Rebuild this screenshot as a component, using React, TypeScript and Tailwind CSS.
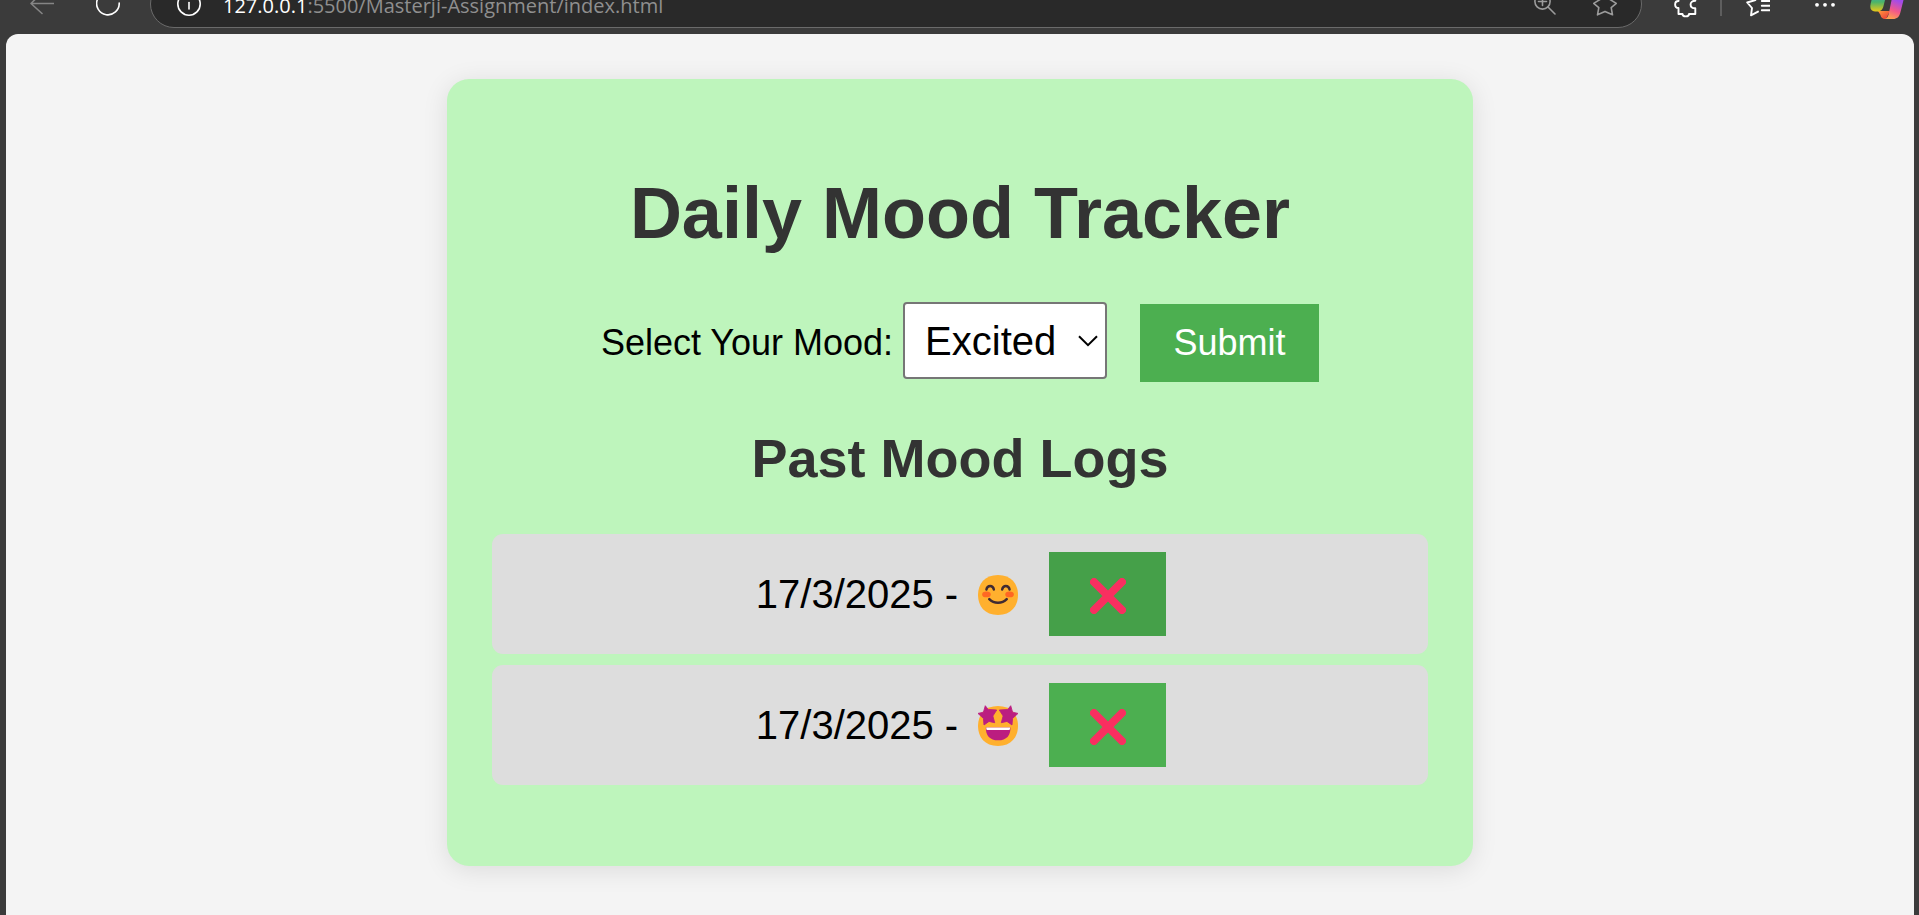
import { useState } from "react";
import type { FormEvent, ReactNode } from "react";

type Mood = "Happy" | "Excited";

const FACE =
  "M16 30C25.33 30 30 23.73 30 16C30 8.27 25.33 2 16 2C6.66 2 2 8.27 2 16C2 23.73 6.66 30 16 30Z";
const STAR =
  "M7.1 1.8L9.1 4.4L15.1 4.8L12.4 9L13.7 13.7L9.7 12.8L6.2 15.3L5.8 10.7L2 7.2L5.8 6.3Z";

function MoodFace({ mood }: { mood: Mood }) {
  return (
    <svg viewBox="2 2 28 28" className="mt-0.5 size-10 overflow-visible" role="img" aria-label={mood}>
      <path d={FACE} fill="#ffb02e" />
      {mood === "Happy" ? (
        <>
          <ellipse cx="7.9" cy="15.6" rx="3" ry="2" fill="#ff6723" />
          <ellipse cx="24.1" cy="15.6" rx="3" ry="2" fill="#ff6723" />
          <g fill="none" stroke="#402a32" strokeLinecap="round">
            <path d="M7.9 12.2C8.5 8.9 12.5 8.9 13.1 12.2" strokeWidth="1.7" />
            <path d="M18.9 12.2C19.5 8.9 23.5 8.9 24.1 12.2" strokeWidth="1.7" />
            <path d="M9.9 18.9C13.2 22.3 18.8 22.3 22.1 18.9" strokeWidth="1.8" />
          </g>
        </>
      ) : (
        <>
          <g fill="#bb1d80" stroke="#bb1d80" strokeWidth="0.6" strokeLinejoin="round">
            <path d={STAR} />
            <path d={STAR} transform="matrix(-1 0 0 1 32 0)" />
          </g>
          <path d="M7.5 17H24.7C24.9 22.5 22 26 16.1 26C10.2 26 7.3 22.5 7.5 17Z" fill="#bb1d80" />
          <path d="M7.8 17H24.4V17.7C24.4 18.4 24 18.8 23.3 18.8H8.9C8.2 18.8 7.8 18.4 7.8 17.7Z" fill="#fff" />
        </>
      )}
    </svg>
  );
}

function Icon({ width, children }: { width: string; children: ReactNode }) {
  return (
    <svg
      className={`h-8 shrink-0 ${width}`}
      fill="none"
      stroke="currentColor"
      strokeWidth="1.6"
      strokeLinecap="round"
      strokeLinejoin="round"
      aria-hidden="true"
    >
      {children}
    </svg>
  );
}

function BrowserBar() {
  return (
    <header className="h-[34px] shrink-0 overflow-hidden bg-[#3b3b3b] text-white">
      <div className="-mt-5 flex h-12 items-center pr-[14px] pl-[30px]">
        <button type="button" aria-label="Back" className="mr-[42px] text-[#858585]">
          <Icon width="w-6">
            <path d="M23.5 15.5H1M12 4.5L1 15.5L12 25.5" />
          </Icon>
        </button>
        <button type="button" aria-label="Reload" className="mr-[30px]">
          <Icon width="w-6">
            <path d="M23.2 15A11.3 11.3 0 1 1 18 6" />
          </Icon>
        </button>
        <div className="mr-[31px] flex h-12 min-w-0 grow items-center rounded-full border border-[#6a6a6a] bg-[#292929] pr-6 pl-[26px]">
          <button type="button" aria-label="Site information" className="mr-[22px]">
            <Icon width="w-6">
              <circle cx="12" cy="16" r="11.2" />
              <path d="M12 14.5V21" />
            </Icon>
          </button>
          <span className="grow truncate pt-[3px] font-['Open_Sans','Noto_Sans',sans-serif] text-[20px] leading-[30px] text-[#8f8f8f]">
            <span className="text-white">127.0.0.1</span>:5500/Masterji-Assignment/index.html
          </span>
          <button type="button" aria-label="Zoom" className="mr-[36px] text-[#9b9b9b]">
            <Icon width="w-6">
              <circle cx="9.5" cy="13.5" r="7.6" />
              <path d="M15 19L22 26M5.5 13.5H13.5M9.5 9.5V17.5" />
            </Icon>
          </button>
          <button type="button" aria-label="Add to favorites" className="text-[#9b9b9b]">
            <Icon width="w-6">
              <path d="M12 3L15.2 10.4L23.3 15.4L18.2 19.6L19.5 26.8L12 23.4L4.5 26.8L5.8 19.6L0.7 15.4L8.8 10.4Z" />
            </Icon>
          </button>
        </div>
        <button type="button" aria-label="Extensions" className="mr-[21px]">
          <Icon width="w-[26px]">
            <path
              strokeWidth="1.9"
              d="M5.5 6V13C1 13 1 20 5.5 20V26H9.5C9.5 29.2 16 29.2 16 26H22.3V20.3C16 20.3 16 12.7 22.3 12.7V6H16C16 2 9.5 2 9.5 6Z"
            />
          </Icon>
        </button>
        <span className="mr-[24px] h-6 w-0.5 shrink-0 bg-[#5e5e5e]" />
        <button type="button" aria-label="Favorites" className="mr-[43px]">
          <Icon width="w-6">
            <path
              strokeWidth="1.9"
              d="M17 8.5L15 8L12.5 4L9.5 12L1.2 14.5L6 20L5 27.3L12 23.6M15.8 13H24M15.8 17.7H24M15.8 22.3H24"
            />
          </Icon>
        </button>
        <button type="button" aria-label="Settings and more" className="mr-[32px]">
          <Icon width="w-6">
            <g fill="currentColor" stroke="none">
              <circle cx="4" cy="16.8" r="1.9" />
              <circle cx="12" cy="16.8" r="1.9" />
              <circle cx="20" cy="16.8" r="1.9" />
            </g>
          </Icon>
        </button>
        <button type="button" aria-label="Copilot">
          <svg className="h-8 w-9 shrink-0" aria-hidden="true">
            <defs>
              <linearGradient id="leaf" x1="0" y1="0" x2="0" y2="1">
                <stop offset="0.2" stopColor="#2a9fd0" />
                <stop offset="0.6" stopColor="#4cb469" />
                <stop offset="1" stopColor="#e8c818" />
              </linearGradient>
              <linearGradient id="ribbon" x1="0.6" y1="0" x2="0.3" y2="1">
                <stop offset="0.25" stopColor="#a24bea" />
                <stop offset="0.65" stopColor="#f2588a" />
                <stop offset="1" stopColor="#ffa24e" />
              </linearGradient>
              <linearGradient id="fold" x1="0" y1="0" x2="1" y2="1">
                <stop offset="0" stopColor="#ff9a3c" />
                <stop offset="1" stopColor="#e8303c" />
              </linearGradient>
            </defs>
            <path d="M9 23H21L17 31C13 31 12 29 11.5 27Z" fill="url(#fold)" />
            <path d="M9 0H19L14.5 18C13.5 22 11.5 23.5 8 23.5H6C2 23.5 0.6 20.5 1.6 16L4 6C5 2 6 0 9 0Z" fill="url(#leaf)" />
            <path d="M24 5H30C34 5 35.5 8 34.5 12L31.5 24C30.3 29 28 31 24 31H16C18 30.5 19 28.5 19.7 26Z" fill="url(#ribbon)" />
          </svg>
        </button>
      </div>
    </header>
  );
}

interface Entry {
  id: number;
  date: string;
  mood: Mood;
}

export default function App() {
  const [mood, setMood] = useState<Mood>("Excited");
  const [logs, setLogs] = useState<Entry[]>([
    { id: 1, date: "17/3/2025", mood: "Happy" },
    { id: 2, date: "17/3/2025", mood: "Excited" },
  ]);

  const submit = (event: FormEvent) => {
    event.preventDefault();
    setLogs([...logs, { id: Date.now(), date: new Date().toLocaleDateString("en-IN"), mood }]);
  };

  return (
    <div className="flex min-h-screen flex-col bg-[#3b3b3b] font-['Liberation_Sans',Arial,sans-serif]">
      <BrowserBar />
      <main className="mr-[5px] ml-1.5 grow rounded-t-xl bg-[#f4f4f4] px-6 pt-[45px] pb-12">
        <section className="mx-auto max-w-[1026px] rounded-[22px] bg-[#bef5bc] px-[45px] pt-[92px] pb-[81px] text-center shadow-[0_4px_26px_rgba(0,0,0,0.1)]">
          <h1 className="text-[72px] leading-[84px] font-bold text-[#333]">Daily Mood Tracker</h1>
          <form onSubmit={submit} className="mt-[47px] flex items-baseline justify-center">
            <label htmlFor="mood" className="mr-[10px] text-[36px] leading-[42px]">
              Select Your Mood:
            </label>
            <div className="relative mr-[33px]">
              <select
                id="mood"
                value={mood}
                onChange={(event) => setMood(event.target.value as Mood)}
                className="h-[77px] w-[204px] appearance-none rounded-[4px] border-2 border-[#767676] bg-white pl-[20px] text-[40px] leading-[46px] text-black"
              >
                <option>Happy</option>
                <option>Excited</option>
              </select>
              <svg
                viewBox="0 0 20 12"
                className="pointer-events-none absolute top-[33px] right-[9px] h-3 w-5"
                fill="none"
                stroke="#000"
                strokeWidth="2"
                aria-hidden="true"
              >
                <path d="M1 1.2L10 10.2L19 1.2" />
              </svg>
            </div>
            <button type="submit" className="h-[78px] w-[179px] bg-[#4caf50] text-[36px] leading-[42px] text-white">
              Submit
            </button>
          </form>
          <h2 className="mt-[45px] text-[54px] leading-[62px] font-bold text-[#333]">Past Mood Logs</h2>
          <ul className="mt-[45px] flex flex-col gap-[11px]">
            {logs.map((log) => (
              <li
                key={log.id}
                className="flex items-center justify-center rounded-[11px] bg-[#ddd] py-[18px] pl-0.5 text-[40px] leading-[46px]"
              >
                <span className="mr-5">{log.date} -</span>
                <MoodFace mood={log.mood} />
                <button
                  type="button"
                  aria-label={`Delete ${log.mood} entry`}
                  onClick={() => setLogs(logs.filter((entry) => entry.id !== log.id))}
                  className={`ml-[31px] flex h-[84px] w-[117px] items-center justify-center ${
                    log.id === 1 ? "bg-[#45a049]" : "bg-[#4caf50]"
                  }`}
                >
                  <svg viewBox="0 0 36 36" className="mt-1 size-9" aria-hidden="true">
                    <path d="M4 4L32 32M32 4L4 32" stroke="#f92f60" strokeWidth="8" strokeLinecap="round" />
                  </svg>
                </button>
              </li>
            ))}
          </ul>
        </section>
      </main>
    </div>
  );
}
